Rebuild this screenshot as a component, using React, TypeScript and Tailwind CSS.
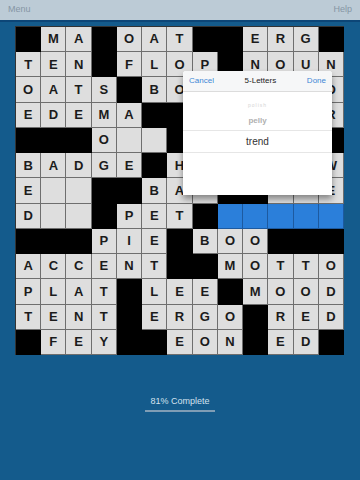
const rows = [
  '#MA#OAT##ERG#',
  'TEN#FLOP#NOUN',
  'OATS#BO.....O',
  'EDEMA##.....R',
  '###O..#.....#',
  'BADGE#H.....W',
  'E..##BA.##..E',
  'D..#PET#*****',
  '###PIE#BOO###',
  'ACCENT##MOTTO',
  'PLAT#LEE#MOOD',
  'TENT#ERGO#RED',
  '#FEY##EON#ED#',
]

function Cell({ ch }: { ch: string }) {
  if (ch === '#') return <div className="border-r border-b border-black bg-black" />
  if (ch === '*') return <div className="border-r border-b border-[#1d5aa0] bg-[#2b7fda]" />
  return (
    <div className="flex items-center justify-center border-r border-b border-[#6e6e6e] bg-[#dedede] text-[13px] font-bold text-[#1b1b1b]">
      {ch === '.' ? '' : ch}
    </div>
  )
}

function WordPicker() {
  return (
    <div className="absolute left-[168px] top-[45px] flex h-[124px] w-[149px] flex-col overflow-hidden rounded-t-[3px] bg-white shadow-[0_4px_6px_rgba(0,0,0,0.4)]">
      <div className="flex h-[21px] shrink-0 items-center justify-between border-b border-[#dcdcdc] bg-[#f6f7f8] px-[6px] text-[8px]">
        <span className="text-[#3d87d6]">Cancel</span>
        <span className="text-[#222]">5-Letters</span>
        <span className="text-[#3d87d6]">Done</span>
      </div>
      <div className="flex flex-col items-center">
        <div className="mt-[11px] h-[5px] text-[5px] leading-[5px] tracking-[1px] text-[#d4d4d4]">polish</div>
        <div className="mt-[8px] h-[9px] text-[8px] leading-[9px] font-bold text-[#b0b0b0]">pelly</div>
        <div className="mt-[5px] flex h-[23px] w-full items-center justify-center border-y border-[#e6e6e6] text-[10px] text-[#333]">
          trend
        </div>
      </div>
    </div>
  )
}

export default function App() {
  return (
    <div className="flex h-[480px] w-[360px] flex-col bg-[#145b8c] font-['Liberation_Sans',Arial,sans-serif]">
      <div className="flex h-[20px] items-center justify-between bg-[#bccbd6] px-[8px] text-[9px] text-[#8696a5]">
        <span>Menu</span>
        <span>Help</span>
      </div>
      <div className="h-[2px] bg-[#0d4677]" />
      <div className="relative ml-[15px] mt-[4px]">
        <div className="grid h-[329px] w-[329px] grid-cols-[repeat(13,1fr)] grid-rows-[repeat(13,1fr)] border-l border-t border-[#333]">
          {rows.map((r, y) => r.split('').map((ch, x) => <Cell key={`${y}-${x}`} ch={ch} />))}
        </div>
        <WordPicker />
      </div>
      <div className="mt-[40px] flex flex-col items-center">
        <span className="text-[9px] leading-[12px] text-[#d3e2ee]">81% Complete</span>
        <div className="mt-[3px] h-[2px] w-[70px] bg-[#7f9db5]" />
      </div>
    </div>
  )
}
